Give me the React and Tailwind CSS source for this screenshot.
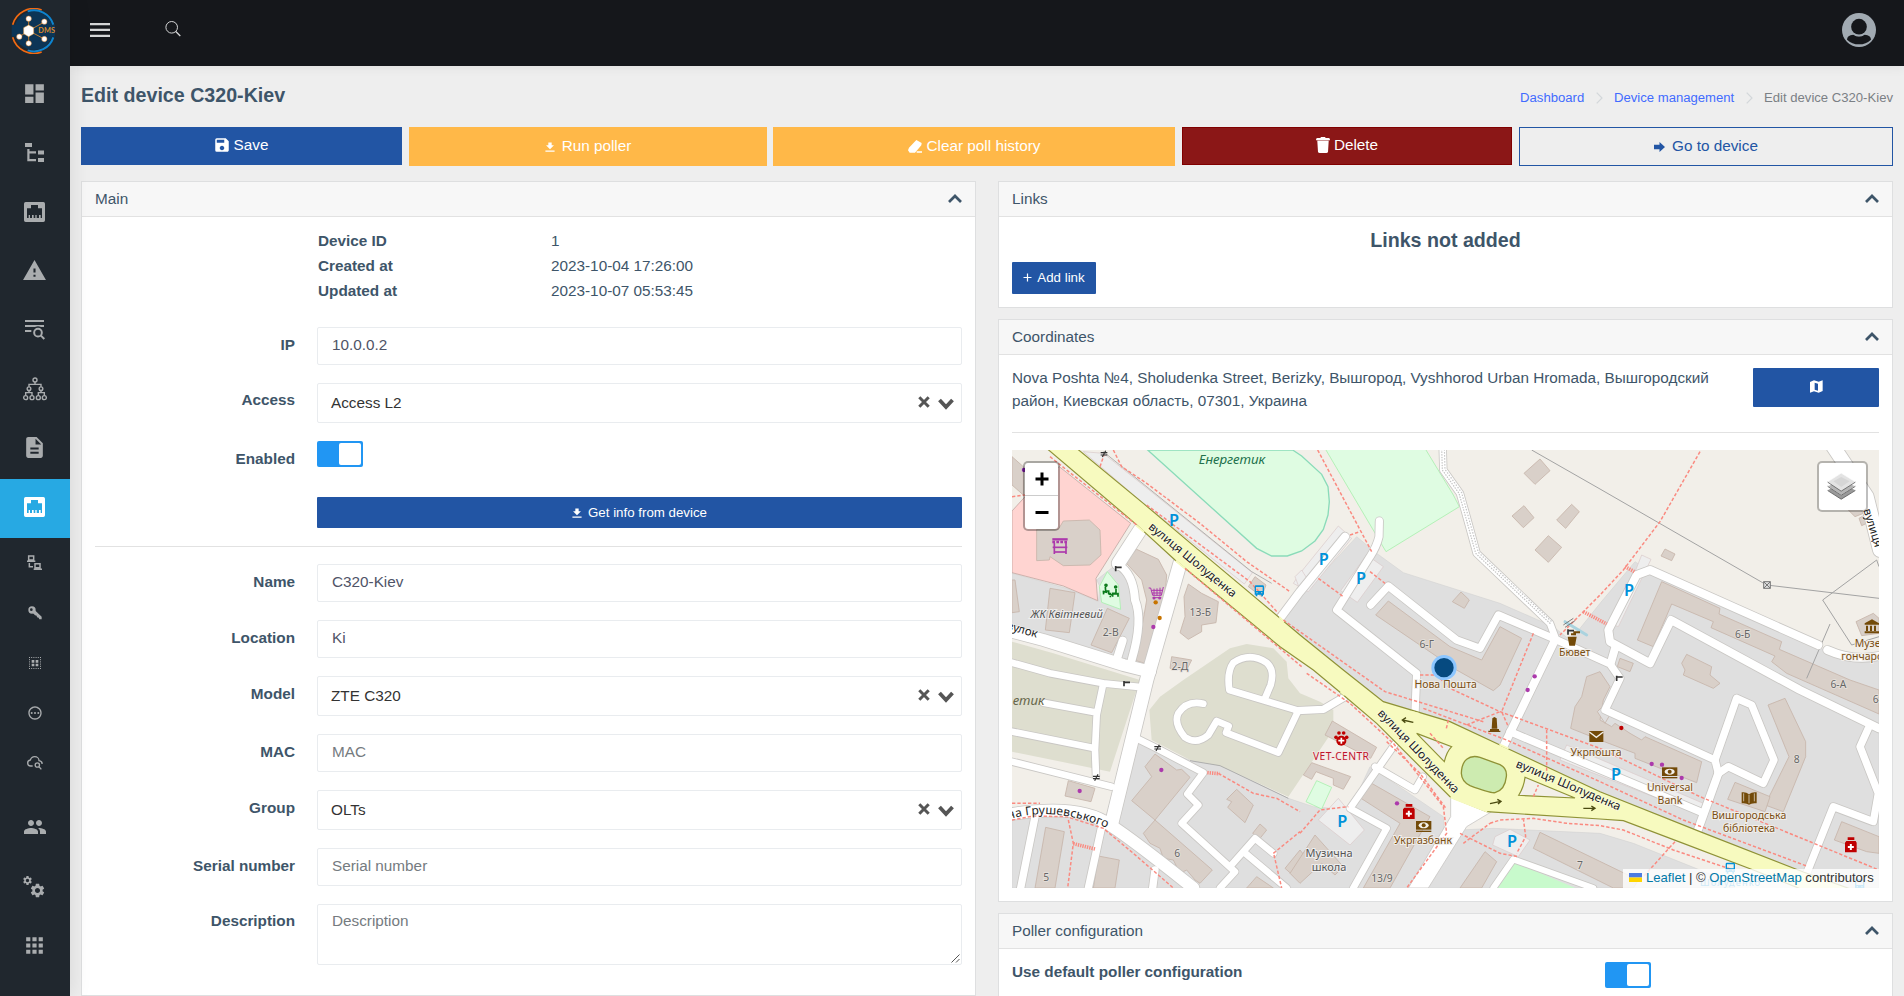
import React from "react";
import {
  MdDashboard, MdWarning, MdDescription, MdPeople, MdSettings, MdApps,
  MdOutlinePending, MdSave,
} from "react-icons/md";

/* ---------- small icons ---------- */

const Logo = () => (
  <svg width="46" height="46" viewBox="0 0 138 138" fill="none">
    <circle cx="68" cy="68" r="58" fill="#0c3556" />
    <rect x="2" y="50" width="130" height="36" fill="#0c3556" />
    <path d="M5 50A66 66 0 0 1 92 6" stroke="#f26a12" strokeWidth="5" />
    <path d="M5 88A66 66 0 0 0 92 132" stroke="#f26a12" strokeWidth="5" />
    <path d="M50 10A61 61 0 0 1 127 50" stroke="#0d84d0" strokeWidth="6" />
    <path d="M50 127A61 61 0 0 0 127 88" stroke="#0d84d0" strokeWidth="6" />
    <path d="M53 68V32M53 68L100 42M53 68L26 86M53 68V106M53 68L100 93" stroke="#e08a2a" strokeWidth="2.5" />
    <path d="M53 51l15 8v18l-15 9-15-9V59z" fill="#fff" stroke="#f0a040" strokeWidth="1.5" />
    <g fill="#fff" stroke="#e8872a" strokeWidth="1.5">
      <circle cx="53" cy="32" r="8" /><circle cx="100" cy="41" r="8" /><circle cx="25" cy="86" r="8" />
      <circle cx="53" cy="106" r="8" /><circle cx="100" cy="93" r="8" />
    </g>
    <text x="82" y="75" fontSize="22" fontFamily="Lato, sans-serif" fontWeight="700" fill="#d98a2b" textLength="50">DMS</text>
  </svg>
);

const Tree = () => (
  <svg width="19" height="19" viewBox="0 0 19 19" fill="currentColor">
    <path d="M0 0h7v4H0zM13 7.5h6v4h-6zM13 15h6v4h-6zM2.3 6h2.2v2.3H11v2.2H4.5v5.6H11v2.2H2.3z" />
  </svg>
);

const Ethernet = () => (
  <svg width="21" height="20" viewBox="0 0 63 60" fill="currentColor">
    <path
      fillRule="evenodd"
      d="M5 0H58Q63 0 63 5V55Q63 60 58 60H5Q0 60 0 55V5Q0 0 5 0ZM9 48V19H21V9H42V19H54V48H50V39H45V48H38V39H34V48H29V39H24V48H18V39H14V48Z"
    />
  </svg>
);

const TextSearch = () => (
  <svg width="21" height="21" viewBox="0 0 63 63" fill="none" stroke="currentColor" strokeWidth="6">
    <path d="M3 6H60M3 21H60M3 36H22" />
    <circle cx="42" cy="41" r="11" stroke="#20272e" strokeWidth="16" />
    <circle cx="42" cy="41" r="11.5" />
    <path d="M50 49L61 60" />
  </svg>
);

const Sitemap = () => (
  <svg width="24" height="24" viewBox="0 0 72 72" fill="none" stroke="currentColor" strokeWidth="4.2">
    <circle cx="36" cy="9" r="6" /><circle cx="18" cy="35" r="5.5" /><circle cx="54" cy="35" r="5.5" />
    <circle cx="8" cy="62" r="6" /><circle cx="27" cy="62" r="6" /><circle cx="46" cy="62" r="6" /><circle cx="64" cy="62" r="6" />
    <path d="M36 15V22M18 29V22H54V29M18 41V47M8 56V47H27V56M54 41V47M46 56V47H64V56" />
  </svg>
);

const Laptops = () => (
  <svg width="15" height="15" viewBox="0 0 45 45" fill="none" stroke="currentColor" strokeWidth="4.500">
    <path d="M5 3H20V15H5zM0 19H25M24 26H39V38H24zM20 43H45M7 24V35H18" />
  </svg>
);

const Key = () => (
  <svg width="14" height="14" viewBox="0 0 42 42" fill="currentColor">
    <path fillRule="evenodd" d="M12 1A11 11 0 1 1 12 23A11 11 0 1 1 12 1ZM10 7A4 4 0 1 0 10 15A4 4 0 1 0 10 7Z" />
    <path d="M14 20L20 12L41 32V40H34L32 35L27 34L26 29L21 28Z" />
  </svg>
);

const SelectGroup = () => (
  <svg width="12" height="12" viewBox="0 0 36 36" fill="none" stroke="currentColor">
    <path d="M0 1.500H36M0 34.500H36M1.500 0V36M34.500 0V36" strokeWidth="3" strokeDasharray="3 3.600" />
    <path d="M8 13H16M20 13H28M8 24H16M20 24H28" strokeWidth="8" />
  </svg>
);

const CloudSearch = () => (
  <svg width="16" height="14" viewBox="0 0 48 42" fill="none" stroke="currentColor" strokeWidth="4">
    <path d="M17 30H11C5 30 2 26 2 21C2 16 6 13 10 12C12 6 17 2 23 2C31 2 36 8 36 14C42 15 46 18 45 24" />
    <circle cx="31" cy="27" r="6.5" /><path d="M36 32L43 40" />
  </svg>
);

const Gears = () => (
  <span className="block h-[22px] w-6">
    <MdSettings size={11} className="-ml-px" />
    <MdSettings size={17} className="-mt-1 ml-[6px]" />
  </span>
);

const Avatar = () => (
  <svg className="ml-auto mt-[13px]" width="34" height="34" viewBox="0 0 102 102">
    <circle cx="51" cy="51" r="51" fill="#a1aab2" />
    <path d="M15 80Q15 66 34 65Q51 76 68 65Q87 66 87 80Q72 94 51 94Q30 94 15 80Z" fill="#15171b" />
    <circle cx="51" cy="42" r="28" fill="#a1aab2" />
    <circle cx="51" cy="41" r="23.500" fill="#15171b" />
  </svg>
);

const Chevron = () => (
  <svg className="mb-px" width="14" height="9" viewBox="0 0 14 9" fill="none" stroke="#3e5569" strokeWidth="2.700">
    <path d="M1 8L7 2L13 8" />
  </svg>
);

const Download = ({ size }) => (
  <svg width={size} height={size} viewBox="0 0 24 24" fill="currentColor">
    <path d="M8 1h8v7H21.500L12 17.500 2.500 8H8zM1 20.500h22v3H1z" />
  </svg>
);

const Eraser = () => (
  <svg width="14" height="13" viewBox="0 0 42 39" fill="currentColor">
    <path d="M25 0L41 9L40 16L21 38H5L0 31L3 23ZM26 34H42V38H26Z" />
  </svg>
);

const Trash = () => (
  <svg width="14" height="16" viewBox="0 0 42 48" fill="currentColor">
    <path d="M14 0H28V3H38Q42 4 42 8V10H0V8Q0 4 4 3H14Z" /><path d="M4 10H38V12H4z" opacity="0.6" />
    <path d="M4 12H38L36 44Q35 48 31 48H11Q7 48 6 44Z" />
  </svg>
);

const MapGlyph = () => (
  <svg width="13" height="13" viewBox="0 0 39 39" fill="#fff">
    <path fillRule="evenodd" d="M0 6L12 1L26 5L38 1V33L26 38L12 34L0 38ZM14 8V29L24 32V11Z" />
  </svg>
);

/* ---------- shell ---------- */

const MAIN_NAV = [
  [<MdDashboard size={25} />], [<Tree />], [<Ethernet />], [<MdWarning size={25} />],
  [<TextSearch />], [<Sitemap />], [<MdDescription size={25} />], [<Ethernet />, true],
];
const SUB_NAV = [<Laptops />, <Key />, <SelectGroup />, <MdOutlinePending size={16} />, <CloudSearch />];
const END_NAV = [<MdPeople size={24} />, <Gears />, <MdApps size={25} />];

const Sidebar = () => (
  <aside className="relative z-20 flex w-[70px] shrink-0 flex-col bg-[#20272e] text-[#a9acae] shadow-[1px_0_20px_rgba(0,0,0,0.1)]">
    <div className="flex h-[66px] items-start justify-center pt-2 pr-[3px]">
      <Logo />
    </div>
    {MAIN_NAV.map(([icon, active], i) => (
      <a key={i} className={active ? "flex h-[59px] items-center justify-center bg-[#27a9e3] pb-[4px] pr-px text-white" : "flex h-[59px] items-center justify-center pb-[4px] pr-px"}>
        {icon}
      </a>
    ))}
    <div className="pb-[11px]">
      {SUB_NAV.map((icon, i) => (
        <a key={i} className="flex h-[50px] items-center justify-center pb-px pr-px">{icon}</a>
      ))}
    </div>
    {END_NAV.map((icon, i) => (
      <a key={i} className="flex h-[59px] items-center justify-center pb-[3px] pr-px">{icon}</a>
    ))}
  </aside>
);

const Header = () => (
  <header className="relative z-10 flex h-[66px] shrink-0 items-start bg-[#15171b] pl-5 pr-7 shadow-[1px_0_12px_rgba(0,0,0,0.08)]">
    <svg className="mt-[23px]" width="20" height="14" viewBox="0 0 20 14" fill="#d5d6d7">
      <path d="M0 0h20v2.300H0zM0 5.800h20v2.300H0zM0 11.700h20v2.300H0z" />
    </svg>
    <svg className="ml-[55px] mt-[21px]" width="16" height="16" viewBox="0 0 16 16" fill="none" stroke="#d5d6d7">
      <circle cx="6.700" cy="6.300" r="5.800" /><path d="M10.800 10.500L15.300 15" strokeWidth="1.300" />
    </svg>
    <Avatar />
  </header>
);

const Card = ({ title, className, children }) => (
  <section className={className}>
    <div className="flex h-[35px] shrink-0 items-center justify-between border-b border-[#e2e2e2] bg-[#f7f7f7] pl-[13px] pr-[13px]">
      <span>{title}</span>
      <Chevron />
    </div>
    {children}
  </section>
);

/* ---------- form ---------- */

const Toggle = () => (
  <span className="flex h-[26px] w-[46px] justify-end rounded-[2px] bg-[#2196f3] p-[2px]">
    <span className="h-[22px] w-[22px] rounded-[2px] bg-white" />
  </span>
);

const Row = ({ label, tall, raised, children }) => (
  <div className={tall ? "flex h-[58px]" : "flex h-[56px]"}>
    <label className={raised ? "mr-[22px] w-[200px] shrink-0 pt-[5px] text-right font-bold leading-[23px]" : "mr-[22px] w-[200px] shrink-0 pt-[6px] text-right font-bold leading-[23px]"}>{label}</label>
    <div className="flex-1">{children}</div>
  </div>
);

const Input = ({ value, placeholder }) => (
  <div className={placeholder ? "h-[38px] rounded-[2px] border border-[#e9ecef] pl-[14px] leading-[33px] text-[#757b80]" : "h-[38px] rounded-[2px] border border-[#e9ecef] pl-[14px] leading-[33px] text-[#4f5467]"}>
    {value || placeholder}
  </div>
);

const Select = ({ value }) => (
  <div className="flex h-[40px] items-center rounded-[2px] border border-[#e9ecef] pl-[13px] pr-[7px] text-[#333]">
    <span className="flex-1">{value}</span>
    <svg className="mb-[3px]" width="12" height="12" viewBox="0 0 12 12" stroke="#555" strokeWidth="3">
      <path d="M1.300 1.300L10.700 10.700M10.700 1.300L1.300 10.700" />
    </svg>
    <svg className="ml-2 mt-px" width="16" height="12" viewBox="0 0 16 12" fill="none" stroke="#555" strokeWidth="3.800">
      <path d="M1.500 2L8 9L14.500 2" />
    </svg>
  </div>
);

const INFO = [["Device ID", "1"], ["Created at", "2023-10-04 17:26:00"], ["Updated at", "2023-10-07 05:53:45"]];

const MainCard = () => (
  <Card title="Main" className="flex h-[815px] w-[895px] flex-col border border-[#dedfe0] bg-white">
    <div className="px-[13px]">
      <div className="mb-[23px] ml-[223px] pt-[12px]">
        {INFO.map(([k, v]) => (
          <div key={k} className="flex h-[25px] items-center">
            <b className="w-[233px]">{k}</b>
            <span>{v}</span>
          </div>
        ))}
      </div>
      <Row label="IP"><Input value="10.0.0.2" /></Row>
      <Row label="Access" tall raised><Select value="Access L2" /></Row>
      <Row label="Enabled"><Toggle /></Row>
      <button className="ml-[222px] flex h-[31px] w-[645px] items-center justify-center gap-[6px] rounded-[1px] bg-[#2255a4] text-[13.300px] text-white">
        <Download size={10} /> Get info from device
      </button>
      <div className="mb-[17px] mt-[18px] border-b border-[#e2e2e2]" />
      <Row label="Name"><Input value="C320-Kiev" /></Row>
      <Row label="Location"><Input value="Ki" /></Row>
      <Row label="Model" tall><Select value="ZTE C320" /></Row>
      <Row label="MAC"><Input placeholder="MAC" /></Row>
      <Row label="Group" tall><Select value="OLTs" /></Row>
      <Row label="Serial number"><Input placeholder="Serial number" /></Row>
      <Row label="Description" raised>
        <div className="flex h-[61px] justify-between rounded-[2px] border border-[#e9ecef] pl-[14px] leading-[32px] text-[#757b80]">
          Description
          <svg className="mb-px mr-px self-end" width="9" height="9" viewBox="0 0 9 9" stroke="#555" strokeWidth="1">
            <path d="M0.500 8.500L8.500 0.500M5 8.500L8.500 5" />
          </svg>
        </div>
      </Row>
    </div>
  </Card>
);

/* ---------- street map, drawn in thirds of a pixel ---------- */

const RESIDENTIAL = [
  "36,400 200,445 295,485 300,440 290,420 340,380 390,420 430,520 400,680 36,560",
  "1070,290 1130,340 1210,398 1500,490 1660,560 1710,600 1740,565 1800,490 1905,365 1950,395 2460,625 2560,655 2637,640 2637,1344 2450,1344 1800,1055 1150,785 900,585 830,540 950,420",
  "415,905 570,960 660,975 865,1075 940,1100 1050,1110 1110,980 1330,1130 1340,1344 36,1344 36,1140 200,1110 330,1150",
  "1380,1170 1480,1165 1800,1180 1900,1210 2200,1330 2200,1344 1280,1344",
];
const GARAGES = [
  "36,605 160,640 420,720 400,780 330,995 36,935",
  "550,720 690,625 740,612 820,625 860,665 865,715 900,760 960,785 1000,810 1000,870 865,1070 660,978 570,960 455,900 448,810 480,770",
];
const PARKINGS = [
  "250,35 310,40 757,398 733,432 430,190", "1015,1075 1093,1170 1050,1215 955,1140",
  "1485,1190 1530,1168 1590,1200 1555,1250 1478,1215", "1015,258 1055,295 925,455 880,430 900,400",
  "1100,345 1150,380 1072,487 1022,452", "1925,345 1953,358 1855,560 1842,555",
  "1700,915 2110,1090 2100,1125 1680,960", "885,410 905,390 930,430 900,450",
];
const BUILDINGS = [
  "36,50 70,80 70,165 36,135",
  "110,268 175,268 190,243 268,240 300,270 303,345 270,375 190,377 150,350 148,360 110,362",
  "375,365 410,328 475,358 500,405 495,470 435,670 408,662 440,480 425,420",
  "36,420 45,420 58,515 36,518", "150,445 225,458 208,578 136,570", "322,505 388,535 335,638 273,615",
  "565,432 605,460 655,485 648,548 605,555 605,575 565,598 540,578 555,530 552,470",
  "515,650 575,660 560,690 510,685", "765,410 798,435 785,470 745,440",
  "1620,57 1650,92 1605,133 1572,100", "1572,197 1602,233 1570,263 1536,228",
  "1715,193 1738,215 1697,265 1670,240", "1645,287 1685,322 1645,367 1605,330",
  "1383,456 1408,480 1393,505 1357,485",
  "1165,483 1350,620 1445,660 1500,560 1565,595 1500,735 1480,752 1370,690 1127,525",
  "1760,710 1745,770 1725,800 1712,865 1800,900 1905,940 1905,955 2090,1028 2105,965 1935,890 1925,900 1890,880 1845,850 1835,860 1800,840 1810,780 1830,740 1800,695",
  "1985,425 2160,505 2157,522 2345,605 2338,628 2550,720 2637,750 2637,822 2360,700 2315,665 2325,648 2133,563 2140,545 2015,492 1960,620 1912,600",
  "2060,643 2135,680 2130,705 2160,730 2140,745 2050,705 2055,690 2045,670",
  "1995,327 2025,342 2015,362 1983,348", "1860,655 1900,670 1890,695 1852,680",
  "2568,545 2620,520 2637,535 2637,580 2585,587", "2545,210 2575,200 2590,220 2565,230",
  "2577,235 2600,222 2610,245 2585,257",
  "2304,795 2355,775 2417,905 2417,950 2350,1115 2295,1095 2367,950",
  "2205,1027 2310,1070 2295,1115 2183,1078", "2525,1145 2637,1190 2637,1240 2600,1235 2503,1200",
  "1620,1177 1915,1320 1900,1344 1840,1344 1600,1225",
  "205,1022 285,1045 273,1085 195,1068", "137,1162 193,1175 165,1344 105,1344", "295,1248 358,1260 345,1344 280,1344",
  "465,942 530,990 545,988 570,1012 465,1140 395,1082 455,1010 435,980",
  "465,1140 637,1290 600,1330 585,1320 560,1290 540,1300 520,1260 490,1255 480,1225 450,1210 430,1180",
  "710,1048 760,1095 735,1148 683,1102 695,1085 680,1078", "780,1152 800,1170 780,1195 758,1180",
  "900,1230 855,1285 900,1325 940,1280", "770,1310 820,1344 740,1344",
  "997,843 1130,922 1112,955 975,885", "935,968 1052,1010 1030,1048 1000,1035 1000,1015 948,995 935,1018 910,1005",
  "1115,1030 1290,1130 1170,1344 1090,1344 1200,1150 1083,1075", "1455,1235 1490,1265 1445,1344 1380,1344",
  "945,1185 1030,1280 1005,1305 965,1270 900,1330 870,1300",
];
const ROADS = [
  [40, "M420,270L355,370"], [24, "M355,375Q400,400 405,480Q430,540 395,660"], [36, "M36,575L130,600L370,675L450,695"],
  [24, "M368,602L348,665"], [40, "M540,370L440,720L335,1150"],
  [20, "M36,668L150,700L310,730L430,742M310,730L290,825L285,930L288,1008M130,788L285,817M36,875L285,925M36,965L335,1040"],
  [36, "M36,1122Q240,1090 330,1155Q400,1200 580,1344"],
  [22, "M105,1130L62,1344M305,1160L265,1344M465,1290L458,1344"],
  [20, "M400,890L470,925L610,998L562,1062L595,1095L545,1150L705,1295L660,1344M690,1280L765,1195L820,1240M730,1235L860,1344"],
  [20, "M795,775L812,735Q825,690 800,668Q750,635 700,668Q680,695 688,750L895,812L835,938L678,878L686,858L650,843L625,885Q590,915 555,892Q520,850 535,820Q560,780 610,791"],
  [22, "M890,812L970,808L1035,770"], [24, "M840,535L900,455L1035,290"],
  [22, "M1138,243L1137,290Q1130,320 1110,350L1010,510L1250,700L1245,820"],
  [22, "M1112,495L1165,438L1370,600L1440,625L1495,525L1660,595L1830,672L1860,715L1815,810L2145,960L2155,1000"],
  [24, "M1665,600L1510,920"], [22, "M1530,875L2100,1115"], [24, "M2155,1000L2090,1180"],
  [22, "M2145,960L2210,775L2255,795L2322,960L2290,1030L2185,980L2155,1000"],
  [24, "M2455,615L1950,390L1910,405L1825,570L1830,605L1950,670L2013,540L2400,750L2637,865M1845,625L1832,670"],
  [24, "M2482,630Q2560,665 2637,648"], [22, "M2605,865L2580,920L2635,1060L2620,1145L2500,1100L2420,1300"],
  [42, "M2500,20L2600,170L2640,330"], [18, "M1480,1344L1540,1258L1780,1344"],
  [20, "M1190,905L1050,1105L1160,1165L1060,1344M1125,980L1245,1050L1268,1010"],
];
const PATHS =
  "M340,30L365,80L440,130L600,250L740,365L870,455M150,50L200,90L410,255M440,195L750,425L835,520M555,385L905,680M850,540L1155,755L1450,845M36,170L75,165M300,80L312,45" +
  "M953,30L1115,335M1050,285L1080,275M955,415L1030,470M1110,395L1155,430M2100,35L1980,245L1870,390L1800,465L1680,585M1600,580L1505,815L1525,860M1400,855L1500,815" +
  "M1260,705L1310,705L1350,745L1500,815L1800,925L2100,1070L2637,1290M1270,805L1520,900L1800,1025L2050,1140L2420,1278M1470,1150L1500,1140L1600,1135L1700,1150L1800,1157L1870,1170L2020,1230L2200,1290M2025,1205L1930,1310" +
  "M920,700L1050,790L1180,910L1330,1100L1340,1180L1220,1344M1160,905L1260,1000L1338,1105M1380,1180L1500,1240L1555,1250M1390,1210L1470,1150M1570,1135L1577,1190L1550,1240M900,1180L960,1110L1045,1100M1290,880L1330,925M1640,870L1640,1000M1600,1070L1615,1035M1345,840L1338,870" +
  "M655,1000L760,1060L830,1075L900,1115M820,1240L900,1175M822,1245L845,1344M205,1140L220,1210L203,1344M36,1140L100,1128L200,1130L310,1165L400,1240L520,1344M36,1090L120,1090";

const DOTS = [
  [467, 487, "#c77400"], [479, 534, "#c77400"], [460, 561, "#ac39ac"], [72, 90, "#7b1fa2"], [484, 990, "#ac39ac"],
  [239, 1053, "#ac39ac"], [1604, 709, "#ac39ac"], [1583, 750, "#ac39ac"], [1191, 1090, "#ac39ac"], [1864, 864, "#bf0000"],
  [1955, 972, "#ac39ac"], [1986, 974, "#ac39ac"], [2045, 1014, "#ac39ac"],
];
const PLACES = [
  [522, 257], [971, 375], [1083, 433], [1887, 469], [1027, 1162], [1536, 1221], [1848, 1020],
];
const NUMBERS = [
  ["13-Б", 601, 528], ["2-В", 332, 587], ["2-Д", 540, 690], ["6-Г", 1280, 625], ["6-Б", 2228, 595], ["6-А", 2515, 745],
  ["6-", 2632, 788], ["5", 139, 1322], ["6", 532, 1250], ["7", 1740, 1286], ["8", 2390, 970], ["13/9", 1146, 1325],
];
const BROWN = [
  ["Нова Пошта", 1337, 745], ["Бювет", 1724, 648], ["Укрпошта", 1788, 948], ["Universal", 2010, 1053], ["Bank", 2010, 1091],
  ["Вишгородська", 2247, 1136], ["бібліотека", 2247, 1175], ["Укргазбанк", 1269, 1213],
];

const Cash = ({ x, y }) => (
  <g transform={`translate(${x} ${y})`}>
    <rect width="46" height="26" fill="#734a08" />
    <ellipse cx="23" cy="13" rx="15" ry="9" fill="#f2efe9" /><circle cx="23" cy="13" r="6" fill="#734a08" />
    <path d="M0 31H46" stroke="#734a08" strokeWidth="4" />
  </g>
);
const Pharmacy = ({ x, y }) => (
  <g transform={`translate(${x} ${y})`}>
    <path d="M8 0H28V8H8zM4 11H32L35 16V45H0V16z" fill="#bf0000" />
    <path d="M17.500 20V38M8.500 29H26.500" stroke="#fff" strokeWidth="6" />
  </g>
);
const Bus = ({ x, y }) => (
  <g transform={`translate(${x} ${y})`}>
    <path fillRule="evenodd" d="M4 0H24Q28 0 28 4V28H25V33H20V28H8V33H3V28H0V4Q0 0 4 0ZM4 5V17H24V5ZM5 21V24H9V21ZM19 21V24H23V21Z" fill="#0092da" />
  </g>
);
const Gate = ({ x, y }) => <path d={`M${x} ${y}v16M${x} ${y + 4}h18`} stroke="#333" strokeWidth="5" fill="none" />;
const Barrier = ({ x, y }) => <path d={`M${x} ${y}h20M${x} ${y + 7}h20M${x + 5} ${y + 13}l10 -19`} stroke="#333" strokeWidth="3.500" fill="none" />;

const StreetMap = () => (
  <svg width="867" height="438" viewBox="36 30 2601 1314" fontFamily="'Noto Sans', sans-serif" className="block">
    <rect x="36" y="30" width="2601" height="1314" fill="#f2efe9" />
    <g fill="#dfdfdf" stroke="#cfcfcf" strokeWidth="1.500">{RESIDENTIAL.map((p) => <polygon key={p} points={p} />)}</g>
    <g fill="#dedecf">{GARAGES.map((p) => <polygon key={p} points={p} />)}</g>
    <polygon points="178,80 392,250 288,415 293,482 190,438 36,398 36,213 130,110" fill="#ffd4d1" stroke="#b59a96" strokeWidth="2" />
    <polygon points="443,30 770,325 815,348 862,348 905,333 945,303 970,268 984,225 988,185 984,140 965,103 905,48 878,30" fill="#dffce2" stroke="#8adbb9" strokeWidth="4" />
    <g fill="#dffce2" stroke="#a9efae" strokeWidth="2.500">
      <polygon points="975,25 1158,335 1378,200 1360,165 1275,25" />
      <polygon points="322,395 355,435 362,508 305,487 298,440" />
      <polygon points="950,1022 995,1042 965,1107 918,1085" />
    </g>
    <polygon points="1540,1265 1740,1350 1490,1350" fill="#c8facc" />
    <g fill="#eeeeee" stroke="#d9c9c9" strokeWidth="2">{PARKINGS.map((p) => <polygon key={p} points={p} />)}</g>
    <g fill="#d9d0c9" stroke="#c6b5a9" strokeWidth="2.500">{BUILDINGS.map((p) => <polygon key={p} points={p} />)}</g>
    <polygon points="1792,815 1812,795 1838,810 1815,850" fill="#e0dfdf" stroke="#c6b5a9" strokeWidth="2.500" />

    <g fill="none" stroke="#a3a3a3" strokeWidth="3">
      <path d="M1595,30L1800,147L2300,435L2637,475M2637,380L2630,360L2468,480L2555,615L2637,590M2490,552L2420,715" />
      <path d="M310,35L755,395L815,430M570,962L660,977L865,1075" strokeWidth="2.500" />
    </g>

    <g fill="none" strokeLinecap="round" strokeLinejoin="round">
      <g stroke="#c9c7c4">
        {ROADS.map(([w, d]) => <path key={d} d={d} strokeWidth={w + 5} />)}
        <path d="M1328,20L1330,90L1380,160Q1400,230 1430,340L1650,550L1665,590" strokeWidth="25" />
      </g>
      <g stroke="#fff">
        {ROADS.map(([w, d]) => <path key={d} d={d} strokeWidth={w} />)}
        <path d="M1328,20L1330,90L1380,160Q1400,230 1430,340L1650,550L1665,590" strokeWidth="20" />
      </g>
      <path d="M1325,20L1327,90L1377,160Q1397,230 1427,340L1650,550" stroke="#c6c6c6" strokeWidth="4" strokeDasharray="1 7" />
      <path d="M1333,20L1335,88L1385,158Q1405,230 1435,337L1656,546" stroke="#c6c6c6" strokeWidth="4" strokeDasharray="1 8" />
    </g>

    <path d="M1352,1068L1475,1115L1400,1160L1285,1344H1225L1352,1130Z" fill="#fff" stroke="#c9c7c4" strokeWidth="2.500" />
    <path
      d="M140,25L405,250L525,360L840,620L940,690L1030,765L1130,850L1350,1070L1460,1115L1800,1137L1870,1142L2050,1210L2260,1290L2410,1350H2560L2410,1296L2100,1175L1800,1055L1500,915L1350,845L1150,785L1030,690L900,585L590,325L430,190L230,25Z"
      fill="#f7fabf" stroke="#8f9236" strokeWidth="3.500"
    />
    <path d="M408,256L432,276M527,362L556,386M838,532L852,545M1034,766L1022,755M1232,815L1258,822M1498,913L1526,926" stroke="#f7fabf" strokeWidth="6" />
    <path d="M1352,1071L1462,1114" stroke="#f7fabf" strokeWidth="8" />
    <g fill="#f2efe9" stroke="#8f9236" strokeWidth="3.500">
      <path d="M1250,880L1355,920Q1340,935 1333,965Z" /><path d="M1575,1012L1725,1074L1556,1066Q1572,1040 1575,1012Z" />
    </g>
    <path d="M1400,958Q1415,945 1440,952L1500,974Q1522,985 1519,1010Q1515,1050 1485,1058Q1470,1060 1410,1037Q1385,1025 1384,1000Q1385,970 1400,958Z" fill="#cdebb0" stroke="#8f9236" strokeWidth="4" />

    <path d={PATHS} fill="none" stroke="#fa8a80" strokeWidth="4.500" strokeDasharray="10 6" />
    <path d="M622,998L658,1001M220,1211L285,1227M1875,380L1903,395M1750,515L1820,552" stroke="#fa8a80" strokeWidth="11" strokeDasharray="4 3" />
    <path d="M1695,545L1760,585" stroke="#aad3df" strokeWidth="9" strokeLinecap="round" />
    <path d="M1690,555L1720,535M1695,562L1725,542" stroke="#666" strokeWidth="2.500" />

    <g fill="#333" stroke="#4a4a10" strokeWidth="4">
      <path d="M1240,847L1208,840M1218,833L1207,840L1216,848" fill="none" />
      <path d="M1470,1091L1502,1084M1492,1078L1503,1084L1494,1092" fill="none" />
      <path d="M1750,1105H1784M1774,1098L1785,1105L1774,1112" fill="none" />
    </g>

    {DOTS.map(([x, y, c]) => <circle key={x} cx={x} cy={y} r="6.500" fill={c} />)}

    <g fill="none" stroke="#ac39ac" strokeWidth="5">
      <path d="M157,298H203" strokeWidth="7" /><path d="M157,306H203" strokeWidth="7" strokeDasharray="8 4" />
      <path d="M163,308V342M198,308V342" /><path d="M158,322H202" /><path d="M163,336H198" />
      <path d="M446,444H452L458,466H484L490,441M454,451H486M456,459H485M462,446V466M471,445V466M480,443V466M458,473H484" strokeWidth="3" />
      <circle cx="462" cy="474" r="2" /><circle cx="479" cy="474" r="2" />
    </g>
    <g fill="none" stroke="#0a7a1a" strokeWidth="5">
      <circle cx="318" cy="436" r="3" /><circle cx="347" cy="441" r="3" />
      <path d="M316,441L317,453H326V463M310,452L311,463M348,447V459L338,460V470M354,458V470M312,455L322,457M340,461L352,462M326,462L338,466M331,458V472" />
    </g>
    <Bus x={764} y={436} /><Bus x={2177} y={1268} /><Bus x={2565} y={1318} />
    <Cash x={1248} y={1143} /><Cash x={1986} y={982} />
    <Pharmacy x={1209} y={1092} /><Pharmacy x={2535} y={1192} />
    <g fill="#bf0000">
      <circle cx="1024" cy="902" r="15" /><circle cx="1008" cy="892" r="5.500" /><circle cx="1040" cy="892" r="5.500" />
      <circle cx="1017" cy="879" r="5.500" /><circle cx="1031" cy="879" r="5.500" />
      <path d="M1024,893V911M1015,902H1033" stroke="#fff" strokeWidth="5" />
    </g>
    <g fill="#734a08">
      <path d="M1768,873H1810V906H1768Z" /><path d="M1768,876L1789,892L1810,876" fill="none" stroke="#f2efe9" strokeWidth="4" />
      <path d="M1477,835L1483,831L1490,835L1492,866H1475ZM1470,867H1497V872H1470ZM1465,872H1501V876H1465Z" />
      <path d="M1703,590H1730L1725,617H1708ZM1713,580H1720V574H1740V580H1728V586H1713Z" />
      <path d="M2225,1057Q2238,1055 2247,1063Q2256,1055 2270,1057V1090Q2256,1088 2247,1094Q2238,1088 2225,1090Z" />
      <path d="M2247,1064V1090M2231,1060V1084M2263,1060V1084" stroke="#f2efe9" strokeWidth="2" />
      <path d="M2594,550L2616,538L2637,550V554H2594ZM2598,557H2604V573H2598ZM2610,557H2616V573H2610ZM2622,557H2628V573H2622ZM2594,574H2637V580H2594Z" />
    </g>
    <path d="M2291,425h20v20h-20zM2291,425l20 20M2311,425l-20 20" fill="#ddd" stroke="#777" strokeWidth="3" />
    <Gate x={347} y={378} /><Gate x={372} y={723} /><Gate x={1704} y={568} /><Gate x={1850} y={707} /><Gate x={1780} y={930} />
    <Barrier x={302} y={38} /><Barrier x={463} y={920} /><Barrier x={279} y={1009} />

    <g fill="#0092da" fontSize="49" fontWeight="700" textAnchor="middle">
      {PLACES.map(([x, y]) => <text key={x} x={x} y={y} fontWeight="600">P</text>)}
    </g>
    <g fill="#666" fontSize="31" textAnchor="middle" stroke="#e6e1dc" strokeWidth="5" paintOrder="stroke">
      {NUMBERS.map(([t, x, y]) => <text key={t} x={x} y={y}>{t}</text>)}
    </g>
    <g fill="#7a4f13" fontSize="31.500" textAnchor="middle" stroke="#f1eeea" strokeWidth="6" paintOrder="stroke">
      {BROWN.map(([t, x, y]) => <text key={t} x={x} y={y}>{t}</text>)}
      <text x="2564" y="621" textAnchor="start">Музей</text>
      <text x="2524" y="659" textAnchor="start">гончарства</text>
    </g>
    <g fill="#555" fontSize="33" textAnchor="middle" stroke="#eee" strokeWidth="6" paintOrder="stroke">
      <text x="987" y="1250">Музична</text><text x="987" y="1292">школа</text>
      <text x="200" y="535" fontSize="32" fontStyle="italic" textLength="217" lengthAdjust="spacingAndGlyphs">ЖК Квітневий</text>
    </g>
    <text x="1023" y="959" fontSize="31" fill="#c0142c" textAnchor="middle" stroke="#f5e9e6" strokeWidth="5" paintOrder="stroke" textLength="168">VET-CENTR</text>
    <text x="596" y="73" fontSize="38" fontStyle="italic" fill="#22714c" textLength="200" lengthAdjust="spacingAndGlyphs">Енергетик</text>
    <text x="38" y="794" fontSize="38" fontStyle="italic" fill="#66664a" textLength="96" lengthAdjust="spacingAndGlyphs">етик</text>
    <g fill="#222" fontSize="35" stroke="#fff" strokeOpacity="0.6" strokeWidth="4" paintOrder="stroke">
      <text transform="translate(443 264) rotate(39.500)" textLength="330" lengthAdjust="spacingAndGlyphs">вулиця Шолуденка</text>
      <text transform="translate(1131 821) rotate(46)" textLength="335" lengthAdjust="spacingAndGlyphs">вулиця Шолуденка</text>
      <text transform="translate(1545 980) rotate(23)" textLength="338" lengthAdjust="spacingAndGlyphs">вулиця Шолуденка</text>
      <text transform="translate(2590 210) rotate(73)">вулиця</text>
      <text transform="translate(18 567) rotate(16)">вулок</text>
      <path id="hrush" d="M26,1139C110,1112 210,1115 340,1172" fill="none" stroke="none" />
      <text fontSize="36"><textPath href="#hrush" textLength="302">на Грушевського</textPath></text>
    </g>
    <text x="2100" y="1338" fontSize="28" fill="#0092da" textLength="180">Шолуденко</text>

    <circle cx="1332" cy="683" r="33.500" fill="#064a80" stroke="#8cc6ff" strokeWidth="9" />
  </svg>
);

const Layers = () => (
  <svg className="mb-px mr-[2px]" width="29" height="28" viewBox="0 0 90 84">
    <path d="M2 55L44 83L88 55L44 34Z" fill="#9a9a9a" />
    <path d="M2 42L44 71L88 42L44 24Z" fill="#b5b5b5" stroke="#fff" strokeWidth="2" />
    <path d="M2 29L44 57L88 29L44 2Z" fill="#e3e3e3" stroke="#fff" strokeWidth="2" />
    <path d="M2 30L44 58L88 30M2 43L44 71L88 43M2 56L44 83L88 56" fill="none" stroke="#555" strokeWidth="2.500" />
    <path d="M20 27L44 14L70 27L44 45Z" fill="#d6d6d6" />
  </svg>
);

const MapPane = () => (
  <div className="relative h-[438px] w-[867px] overflow-hidden">
    <StreetMap />
    <div className="absolute left-[11px] top-[11px] w-[37px] rounded-[5px] border-2 border-black/30 bg-white bg-clip-padding">
      <div className="flex h-[33px] items-center justify-center border-b border-[#ccc]">
        <svg width="14" height="14" viewBox="0 0 14 14" stroke="#000" strokeWidth="3"><path d="M0.500 7H13.500M7 0.500V13.500" /></svg>
      </div>
      <div className="flex h-[33px] items-center justify-center">
        <svg width="14" height="14" viewBox="0 0 14 14" stroke="#000" strokeWidth="3"><path d="M0.500 6.500H13.500" /></svg>
      </div>
    </div>
    <div className="absolute right-[11px] top-[11px] flex h-[51px] w-[51px] items-center justify-center rounded-[5px] border-2 border-black/25 bg-white bg-clip-padding">
      <Layers />
    </div>
    <div className="absolute bottom-0 right-0 flex h-[19px] w-[256px] items-center whitespace-pre bg-white/80 pb-[2px] pl-[6px] text-[13.100px] text-[#333]">
      <svg className="mr-1" width="13" height="9" viewBox="0 0 13 9"><path fill="#4c7be1" d="M0 0h13v4.500H0z" /><path fill="#ffd500" d="M0 4.500h13V9H0z" /></svg>
      <span className="text-[#0078a8]">Leaflet</span> | © <span className="text-[#0078a8]">OpenStreetMap</span> contributors
    </div>
  </div>
);

/* ---------- page ---------- */

const Crumb = () => (
  <svg className="mx-[11.400px]" width="7" height="12" viewBox="0 0 7 12" fill="none" stroke="#d3d7da" strokeWidth="1.200"><path d="M0.700 0.700L6 6L0.700 11.300" /></svg>
);

export default function App() {
  return (
    <div className="flex h-[996px] w-[1904px] overflow-hidden bg-[#eeeeee] font-['Liberation_Sans',sans-serif] text-[15.300px] text-[#3e5569]">
      <Sidebar />
      <div className="flex flex-1 flex-col">
        <Header />
        <main className="flex flex-1 flex-col px-[11px]">
          <div className="flex h-[61px] items-center justify-between">
            <h1 className="pb-[2px] text-[19.650px] font-bold">Edit device C320-Kiev</h1>
            <nav className="flex items-center pt-[2px] text-[13.120px] text-[#416bff]">
              <span>Dashboard</span><Crumb /><span>Device management</span><Crumb />
              <span className="text-[#7b8085]">Edit device C320-Kiev</span>
            </nav>
          </div>
          <div className="flex h-[54px] items-start text-white">
            <button className="mr-[7px] flex h-[38px] w-[321px] items-center justify-center gap-[3px] bg-[#2255a4] pb-[2px] pr-[2px]"><MdSave size={18} /> Save</button>
            <button className="mr-[6px] flex h-[39px] w-[358px] items-center justify-center gap-[7px] bg-[#ffb848]"><Download size={10} /> Run poller</button>
            <button className="mr-[7px] flex h-[39px] w-[402px] items-center justify-center gap-[5px] bg-[#ffb848]"><Eraser /> Clear poll history</button>
            <button className="mr-[7px] flex h-[38px] w-[330px] items-center justify-center gap-[4px] border border-[#800000] bg-[#8b1717] pb-[2px]"><Trash /> Delete</button>
            <button className="flex h-[39px] w-[374px] items-center justify-center gap-[7px] border border-[#2255a4] text-[#2255a4]">
              <svg width="11" height="10" viewBox="0 0 11 10" fill="currentColor"><path d="M0 2.700h5.500V0L11 5L5.500 10V7.300H0z" /></svg> Go to device
            </button>
          </div>
          <div className="flex gap-[22px]">
            <MainCard />
            <div className="flex w-[895px] flex-col gap-[11px]">
              <Card title="Links" className="h-[127px] border border-[#dedfe0] bg-white">
                <div className="px-[13px] pt-[11px]">
                  <h2 className="text-center text-[19.650px] font-bold leading-6">Links not added</h2>
                  <button className="mt-[10px] flex h-[32px] w-[84px] items-center justify-center gap-[5px] rounded-[1px] bg-[#2255a4] pb-px text-[13.300px] text-white">
                    <svg width="9" height="9" viewBox="0 0 9 9" stroke="#fff" strokeWidth="1.200"><path d="M0.500 4.500H8.500M4.500 0.500V8.500" /></svg> Add link
                  </button>
                </div>
              </Card>
              <Card title="Coordinates" className="h-[583px] border border-[#dedfe0] bg-white">
                <div className="px-[13px]">
                  <div className="mb-[17px] flex h-[78px] items-start justify-between border-b border-[#e2e2e2] pt-[11px]">
                    <p className="w-[710px] leading-[23px]">
                      Nova Poshta №4, Sholudenka Street, Berizky, Вышгород, Vyshhorod Urban Hromada, Вышгородский район, Киевская область, 07301, Украина
                    </p>
                    <button className="mt-[2px] flex h-[39px] w-[126px] items-center justify-center rounded-[1px] bg-[#2255a4] pb-[2px]"><MapGlyph /></button>
                  </div>
                  <MapPane />
                </div>
              </Card>
              <Card title="Poller configuration" className="h-[83px] border border-b-0 border-[#dedfe0] bg-white">
                <div className="flex items-start px-[13px] pt-[13px]">
                  <b className="w-[593px] leading-[19px]">Use default poller configuration</b>
                  <Toggle />
                </div>
              </Card>
            </div>
          </div>
        </main>
      </div>
    </div>
  );
}
